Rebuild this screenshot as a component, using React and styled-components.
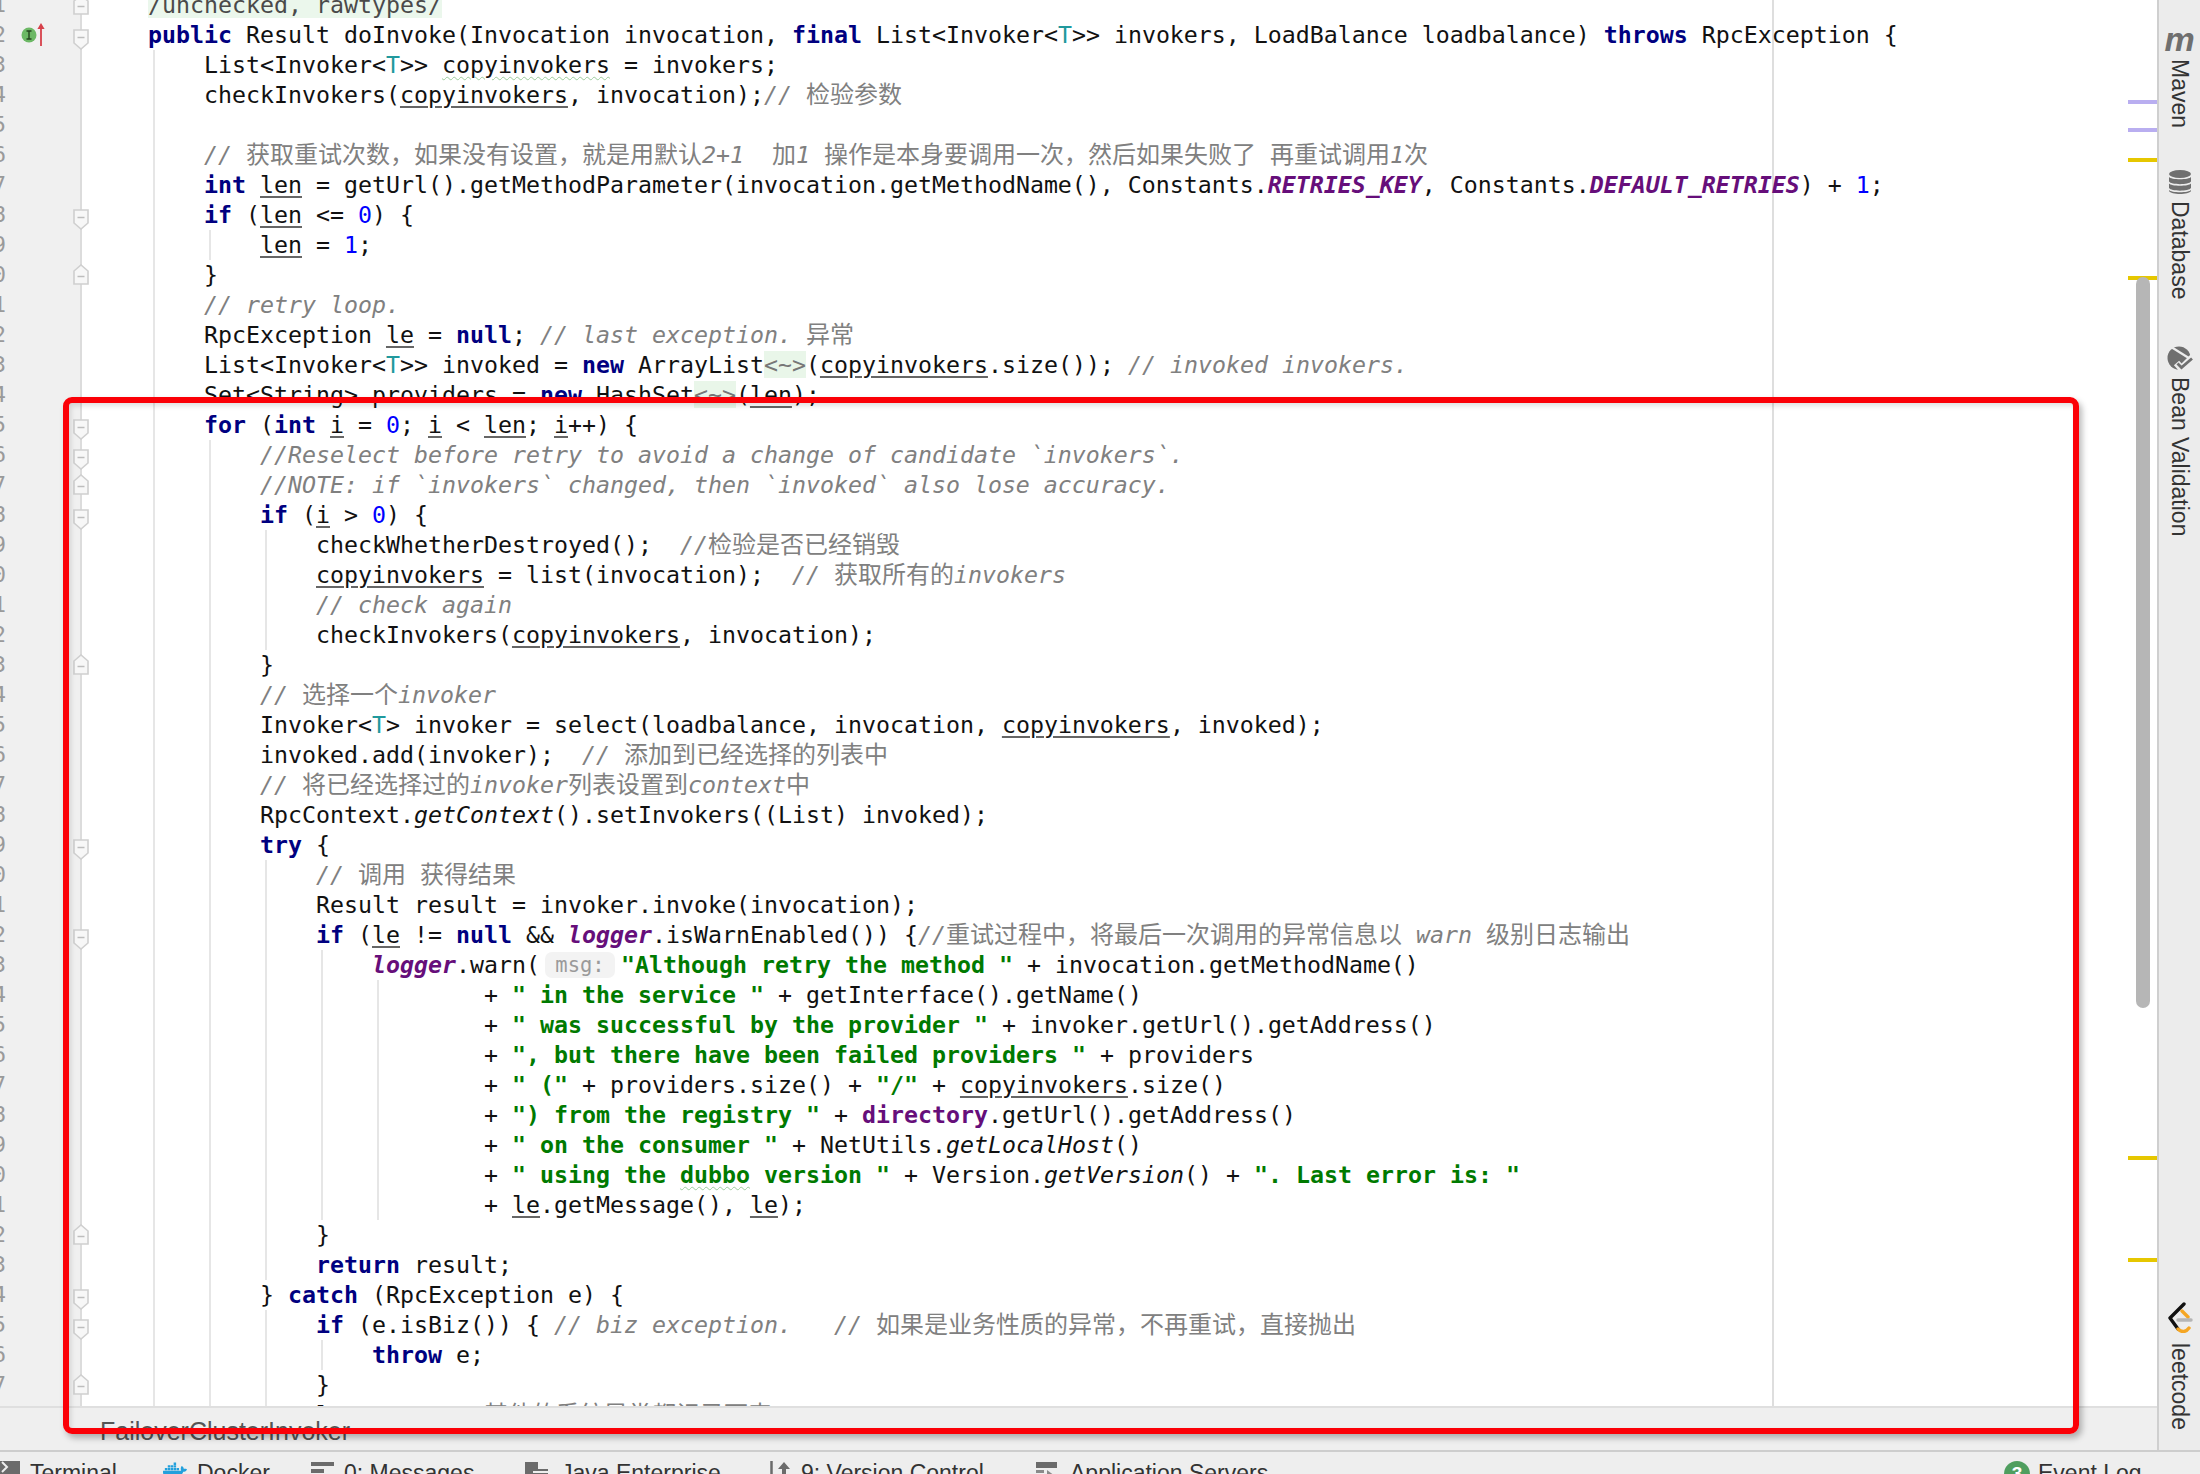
import React from "react";
import styled, { createGlobalStyle } from "styled-components";
import { FaDocker } from "react-icons/fa";

const GlobalStyle = createGlobalStyle`
  html, body {
    margin: 0;
    padding: 0;
    height: 100%;
    overflow: hidden;
    background: #fff;
  }
`;

const CHAR = 14.0;
const UI_FONT = `"Liberation Sans", Arial, sans-serif`;
const CODE_FONT = `"DejaVu Sans Mono", "Noto Sans CJK SC", monospace`;

const Page = styled.div`
  position: relative;
  width: 2200px;
  height: 1474px;
  display: flex;
  flex-direction: column;
  overflow: hidden;
  font-family: ${UI_FONT};
`;

const Workspace = styled.div`
  flex: 1;
  min-height: 0;
  display: flex;
`;

const Main = styled.div`
  flex: 1;
  min-width: 0;
  display: flex;
  flex-direction: column;
`;

const Editor = styled.div`
  position: relative;
  flex: 1;
  min-height: 0;
  overflow: hidden;
  background: #fff;
`;

const Lines = styled.div`
  margin-top: -10px;
`;

const MarginLine = styled.div`
  position: absolute;
  top: 0;
  bottom: 0;
  left: 1772px;
  width: 2px;
  background: #dedede;
`;

const Row = styled.div`
  position: relative;
  z-index: 1;
  display: flex;
  height: 30px;
`;

const GutterCell = styled.div`
  position: relative;
  flex: none;
  box-sizing: border-box;
  width: 82px;
  height: 30px;
  background: #f0f0f0;
  border-right: 2px solid #dcdcdc;
`;

const LineNo = styled.div`
  width: 6px;
  height: 30px;
  display: flex;
  justify-content: flex-end;
  overflow: hidden;
  font: 22px/30px ${CODE_FONT};
  color: #9a9a9a;
`;

const FoldIcon = styled.svg`
  position: absolute;
  left: 73px;
  top: ${({ $end }) => ($end ? 4 : 9)}px;
  width: 16px;
  height: 21px;
`;

const BreakIcon = styled.svg`
  position: absolute;
  left: 21px;
  top: 2px;
  width: 28px;
  height: 26px;
`;

const guideLayer = ({ $depth = 0 }) => {
  if (!$depth) return "";
  const items = Array.from({ length: $depth }, (_, n) => n);
  return `
    background-image: ${items.map(() => "linear-gradient(#e6e6e6, #e6e6e6)").join(", ")};
    background-size: 2px 100%;
    background-repeat: no-repeat;
    background-position: ${items.map((n) => `${71 + n * 55.9}px 0`).join(", ")};
  `;
};

const Code = styled.div`
  flex: 1;
  min-width: 0;
  box-sizing: border-box;
  height: 30px;
  padding-left: ${({ $col = 0 }) => 66 + $col * CHAR}px;
  font-family: ${CODE_FONT};
  font-size: 23.25px;
  line-height: 30px;
  white-space: pre;
  color: #111;
  ${guideLayer}
`;

const Kw = styled.span`
  color: #000080;
  font-weight: 700;
`;

const Str = styled.span`
  color: #007a00;
  font-weight: 700;
`;

const Num = styled.span`
  color: #0000ff;
`;

const Cm = styled.span`
  color: #808080;
  font-style: italic;
`;

const Zh = styled.span`
  font-family: "Noto Sans CJK SC", sans-serif;
  font-size: 24px;
  font-style: normal;
  line-height: 0;
`;

const TypeVar = styled.span`
  color: #20999d;
`;

const Field = styled.span`
  color: #660e7a;
  font-weight: 700;
  font-style: ${({ $plain }) => ($plain ? "normal" : "italic")};
`;

const Static = styled.span`
  font-style: italic;
`;

const Reassigned = styled.span`
  text-decoration: underline;
  text-decoration-color: #666;
  text-underline-offset: 3px;
`;

const Typo = styled.span`
  text-decoration: underline wavy #9ccb9c;
  text-decoration-thickness: 1px;
  text-underline-offset: 3px;
`;

const Folded = styled.span`
  background: #e9f6e9;
  color: #777;
`;

const Annotation = styled.span`
  background: #ebf7ec;
  color: #4a4a4a;
`;

const Hint = styled.span`
  display: inline-block;
  box-sizing: border-box;
  width: 70px;
  height: 26px;
  margin: 2px 6px 0 5px;
  border-radius: 7px;
  background: #f3f3f3;
  color: #9a9a9a;
  font-size: 20.5px;
  line-height: 26px;
  text-align: center;
  vertical-align: top;
`;

const Stripe = styled.div`
  position: absolute;
  right: 0;
  top: ${({ $y }) => $y}px;
  width: 29px;
  height: 4px;
  background: ${({ $kind }) => ($kind === "warn" ? "#e6c700" : "#b9aef0")};
  z-index: 2;
`;

const ScrollThumb = styled.div`
  position: absolute;
  top: 277px;
  left: 2136px;
  width: 14px;
  height: 731px;
  border-radius: 7px;
  background: #b6b6b6;
  z-index: 3;
`;

const Breadcrumb = styled.div`
  flex: none;
  box-sizing: border-box;
  height: 44px;
  padding: 10px 0 0 100px;
  border-top: 2px solid #dfdfdf;
  background: #efefef;
  color: #555;
  font-size: 25px;
  line-height: 26px;
`;

const SideBar = styled.aside`
  flex: none;
  box-sizing: border-box;
  width: 43px;
  padding-top: 30px;
  display: flex;
  flex-direction: column;
  border-left: 2px solid #cfcfcf;
  background: #ececec;
`;

const SideTab = styled.div`
  display: flex;
  flex-direction: column;
  align-items: center;
  margin-top: ${({ $gap = 0 }) => $gap}px;
  color: #333;
`;

const SideLabel = styled.span`
  writing-mode: vertical-rl;
  font-size: 23px;
  line-height: 24px;
`;

const MavenMark = styled.span`
  height: 24px;
  margin-bottom: 5px;
  color: #6f6f6f;
  font-size: 34px;
  font-weight: 700;
  font-style: italic;
  line-height: 18px;
`;

const SideIcon = styled.svg`
  display: block;
  flex: none;
  width: 26px;
  height: ${({ $h = 26 }) => $h}px;
  margin-bottom: ${({ $mb = 10 }) => $mb}px;
`;

const StatusBar = styled.footer`
  flex: none;
  box-sizing: border-box;
  height: 24px;
  padding-top: 9px;
  display: flex;
  border-top: 2px solid #cdcdcd;
  background: #eeeeee;
  overflow: hidden;
`;

const ToolTab = styled.div`
  display: flex;
  flex: none;
  width: ${({ $w }) => $w}px;
  gap: ${({ $gap = 10 }) => $gap}px;
  margin-left: ${({ $auto }) => ($auto ? "auto" : "0")};
  color: #333;
  font-size: 23px;
  line-height: 24px;
  white-space: nowrap;
`;

const ToolIcon = styled.svg`
  flex: none;
  width: ${({ $w = 24 }) => $w}px;
  height: 24px;
`;

const DockerIcon = styled(FaDocker)`
  flex: none;
  width: 24px;
  height: 20px;
  color: #23a0dc;
`;

const EventBadge = styled.span`
  flex: none;
  width: 26px;
  height: 26px;
  border-radius: 50%;
  background: #4f9e5f;
  color: #fff;
  font-size: 19px;
  font-weight: 700;
  line-height: 26px;
  text-align: center;
`;

const Highlight = styled.div`
  position: absolute;
  left: 63px;
  top: 397px;
  width: 2016px;
  height: 1037px;
  box-sizing: border-box;
  border: 6.5px solid #fb0007;
  border-radius: 9px;
  box-shadow: 3px 4px 6px rgba(0, 0, 0, 0.28), inset 2px 3px 5px rgba(0, 0, 0, 0.12);
  z-index: 5;
  pointer-events: none;
`;

function Fold({ end }) {
  return (
    <FoldIcon viewBox="0 0 16 21" $end={end}>
      <path
        d={end ? "M1 20V7L8 1l7 6v13z" : "M1 1v13l7 6 7-6V1z"}
        fill="#f7f7f7"
        stroke="#cfcfcf"
        strokeWidth="1.6"
      />
      <path d={end ? "M4.5 12.5h7" : "M4.5 8.5h7"} stroke="#bdbdbd" strokeWidth="1.5" />
    </FoldIcon>
  );
}

function Line({ n, fold, col, depth, mark, children }) {
  return (
    <Row>
      <GutterCell>
        <LineNo>{n % 10}</LineNo>
        {mark && (
          <BreakIcon viewBox="0 0 28 26">
            <circle cx="8" cy="13" r="7.5" fill="#6cb865" />
            <path d="M5.5 9h5M5.5 17h5M8 9v8" stroke="#24451f" strokeWidth="1.4" fill="none" />
            <path d="M20 24V5" stroke="#d6404a" strokeWidth="1.8" />
            <path d="M20 1l-3.6 6h7.2z" fill="#d6404a" />
          </BreakIcon>
        )}
        {fold && <Fold end={fold === "end"} />}
      </GutterCell>
      <Code $col={col} $depth={depth}>
        {children}
      </Code>
    </Row>
  );
}

const Copy = () => <Reassigned>copyinvokers</Reassigned>;
const Len = () => <Reassigned>len</Reassigned>;
const Le = () => <Reassigned>le</Reassigned>;
const I = () => <Reassigned>i</Reassigned>;
const T = () => <TypeVar>T</TypeVar>;

function CodeLines() {
  return (
    <Lines>
      <Line n={1} fold="end"><Annotation>/unchecked, rawtypes/</Annotation></Line>
      <Line n={2} fold="start" mark>
        <Kw>public</Kw> Result doInvoke(Invocation invocation, <Kw>final</Kw> List&lt;Invoker&lt;<T />&gt;&gt; invokers, LoadBalance loadbalance) <Kw>throws</Kw> RpcException {"{"}
      </Line>
      <Line n={3} col={4} depth={1}>List&lt;Invoker&lt;<T />&gt;&gt; <Typo>copyinvokers</Typo> = invokers;</Line>
      <Line n={4} col={4} depth={1}>checkInvokers(<Copy />, invocation);<Cm>// <Zh>检验参数</Zh></Cm></Line>
      <Line n={5} depth={1} />
      <Line n={6} col={4} depth={1}>
        <Cm>// <Zh>获取重试次数，如果没有设置，就是用默认</Zh>2+1  <Zh>加</Zh>1 <Zh>操作是本身要调用一次，然后如果失败了</Zh> <Zh>再重试调用</Zh>1<Zh>次</Zh></Cm>
      </Line>
      <Line n={7} col={4} depth={1}>
        <Kw>int</Kw> <Len /> = getUrl().getMethodParameter(invocation.getMethodName(), Constants.<Field>RETRIES_KEY</Field>, Constants.<Field>DEFAULT_RETRIES</Field>) + <Num>1</Num>;
      </Line>
      <Line n={8} col={4} depth={1} fold="start"><Kw>if</Kw> (<Len /> &lt;= <Num>0</Num>) {"{"}</Line>
      <Line n={9} col={8} depth={2}><Len /> = <Num>1</Num>;</Line>
      <Line n={10} col={4} depth={1} fold="end">{"}"}</Line>
      <Line n={11} col={4} depth={1}><Cm>// retry loop.</Cm></Line>
      <Line n={12} col={4} depth={1}>
        RpcException <Le /> = <Kw>null</Kw>; <Cm>// last exception. <Zh>异常</Zh></Cm>
      </Line>
      <Line n={13} col={4} depth={1}>
        List&lt;Invoker&lt;<T />&gt;&gt; invoked = <Kw>new</Kw> ArrayList<Folded>&lt;~&gt;</Folded>(<Copy />.size()); <Cm>// invoked invokers.</Cm>
      </Line>
      <Line n={14} col={4} depth={1}>
        Set&lt;String&gt; providers = <Kw>new</Kw> HashSet<Folded>&lt;~&gt;</Folded>(<Len />);
      </Line>
      <Line n={15} col={4} depth={1} fold="start">
        <Kw>for</Kw> (<Kw>int</Kw> <I /> = <Num>0</Num>; <I /> &lt; <Len />; <I />++) {"{"}
      </Line>
      <Line n={16} col={8} depth={2} fold="start"><Cm>//Reselect before retry to avoid a change of candidate `invokers`.</Cm></Line>
      <Line n={17} col={8} depth={2} fold="end"><Cm>//NOTE: if `invokers` changed, then `invoked` also lose accuracy.</Cm></Line>
      <Line n={18} col={8} depth={2} fold="start"><Kw>if</Kw> (<I /> &gt; <Num>0</Num>) {"{"}</Line>
      <Line n={19} col={12} depth={3}>checkWhetherDestroyed();  <Cm>//<Zh>检验是否已经销毁</Zh></Cm></Line>
      <Line n={20} col={12} depth={3}><Copy /> = list(invocation);  <Cm>// <Zh>获取所有的</Zh>invokers</Cm></Line>
      <Line n={21} col={12} depth={3}><Cm>// check again</Cm></Line>
      <Line n={22} col={12} depth={3}>checkInvokers(<Copy />, invocation);</Line>
      <Line n={23} col={8} depth={2} fold="end">{"}"}</Line>
      <Line n={24} col={8} depth={2}><Cm>// <Zh>选择一个</Zh>invoker</Cm></Line>
      <Line n={25} col={8} depth={2}>
        Invoker&lt;<T />&gt; invoker = select(loadbalance, invocation, <Copy />, invoked);
      </Line>
      <Line n={26} col={8} depth={2}>invoked.add(invoker);  <Cm>// <Zh>添加到已经选择的列表中</Zh></Cm></Line>
      <Line n={27} col={8} depth={2}><Cm>// <Zh>将已经选择过的</Zh>invoker<Zh>列表设置到</Zh>context<Zh>中</Zh></Cm></Line>
      <Line n={28} col={8} depth={2}>RpcContext.<Static>getContext</Static>().setInvokers((List) invoked);</Line>
      <Line n={29} col={8} depth={2} fold="start"><Kw>try</Kw> {"{"}</Line>
      <Line n={30} col={12} depth={3}><Cm>// <Zh>调用</Zh> <Zh>获得结果</Zh></Cm></Line>
      <Line n={31} col={12} depth={3}>Result result = invoker.invoke(invocation);</Line>
      <Line n={32} col={12} depth={3} fold="start">
        <Kw>if</Kw> (<Le /> != <Kw>null</Kw> &amp;&amp; <Field>logger</Field>.isWarnEnabled()) {"{"}<Cm>//<Zh>重试过程中，将最后一次调用的异常信息以</Zh> warn <Zh>级别日志输出</Zh></Cm>
      </Line>
      <Line n={33} col={16} depth={4}>
        <Field>logger</Field>.warn(<Hint>msg:</Hint><Str>"Although retry the method "</Str> + invocation.getMethodName()
      </Line>
      <Line n={34} col={24} depth={5}>+ <Str>" in the service "</Str> + getInterface().getName()</Line>
      <Line n={35} col={24} depth={5}>+ <Str>" was successful by the provider "</Str> + invoker.getUrl().getAddress()</Line>
      <Line n={36} col={24} depth={5}>+ <Str>", but there have been failed providers "</Str> + providers</Line>
      <Line n={37} col={24} depth={5}>+ <Str>" ("</Str> + providers.size() + <Str>"/"</Str> + <Copy />.size()</Line>
      <Line n={38} col={24} depth={5}>+ <Str>") from the registry "</Str> + <Field $plain>directory</Field>.getUrl().getAddress()</Line>
      <Line n={39} col={24} depth={5}>+ <Str>" on the consumer "</Str> + NetUtils.<Static>getLocalHost</Static>()</Line>
      <Line n={40} col={24} depth={5}>
        + <Str>" using the <Typo>dubbo</Typo> version "</Str> + Version.<Static>getVersion</Static>() + <Str>". Last error is: "</Str>
      </Line>
      <Line n={41} col={24} depth={5}>+ <Le />.getMessage(), <Le />);</Line>
      <Line n={42} col={12} depth={3} fold="end">{"}"}</Line>
      <Line n={43} col={12} depth={3}><Kw>return</Kw> result;</Line>
      <Line n={44} col={8} depth={2} fold="start">{"} "}<Kw>catch</Kw> (RpcException e) {"{"}</Line>
      <Line n={45} col={12} depth={3} fold="start">
        <Kw>if</Kw> (e.isBiz()) {"{"} <Cm>// biz exception.   // <Zh>如果是业务性质的异常，不再重试，直接抛出</Zh></Cm>
      </Line>
      <Line n={46} col={16} depth={4}><Kw>throw</Kw> e;</Line>
      <Line n={47} col={12} depth={3} fold="end">{"}"}</Line>
      <Line n={48} col={12} depth={3}><Le /> = e;  <Cm>// <Zh>其他的系统异常都记录下来</Zh></Cm></Line>
    </Lines>
  );
}

function DatabaseGlyph() {
  return (
    <SideIcon viewBox="0 0 26 26" $mb={6}>
      <g fill="#6f6f6f">
        <ellipse cx="13" cy="5" rx="11" ry="4" />
        <path d="M2 8c2 3 20 3 22 0v4.5c-2 3.5-20 3.5-22 0z" />
        <path d="M2 14.5c2 3 20 3 22 0v4.5c-2 3.500-20 3.500-22 0z" />
        <path d="M2 21c2 3 20 3 22 0v1c-2 4-20 4-22 0z" />
      </g>
    </SideIcon>
  );
}

function BeanGlyph() {
  return (
    <SideIcon viewBox="0 0 26 26" $mb={5}>
      <circle cx="12" cy="12" r="11.500" fill="#6f6f6f" />
      <path d="M5 1.500L25 14" stroke="#ececec" strokeWidth="2.200" />
      <path d="M9.500 17l5 5.500L26 11" fill="none" stroke="#ececec" strokeWidth="7" />
      <path d="M10.500 17.500l4 4L25 12.500" fill="none" stroke="#6f6f6f" strokeWidth="2.800" />
    </SideIcon>
  );
}

function LeetcodeGlyph() {
  return (
    <SideIcon viewBox="0 0 26 31" $h={31} $mb={10}>
      <path d="M17 2L3 16 11 27" fill="none" stroke="#111" strokeWidth="3.400" strokeLinecap="round" strokeLinejoin="round" />
      <path d="M15 9l6 6M11 27c4 4 8 3 11-1" fill="none" stroke="#f5a623" strokeWidth="3.400" strokeLinecap="round" />
      <path d="M11 18h13" stroke="#b5b5b5" strokeWidth="3.400" strokeLinecap="round" />
    </SideIcon>
  );
}

export default function App() {
  return (
    <Page>
      <GlobalStyle />
      <Workspace>
        <Main>
          <Editor>
            <MarginLine />
            <CodeLines />
            <Stripe $y={100} />
            <Stripe $y={128} />
            <Stripe $y={158} $kind="warn" />
            <Stripe $y={276} $kind="warn" />
            <Stripe $y={1156} $kind="warn" />
            <Stripe $y={1258} $kind="warn" />
            <ScrollThumb />
          </Editor>
          <Breadcrumb>FailoverClusterInvoker</Breadcrumb>
        </Main>
        <SideBar>
          <SideTab>
            <MavenMark>m</MavenMark>
            <SideLabel>Maven</SideLabel>
          </SideTab>
          <SideTab $gap={41}>
            <DatabaseGlyph />
            <SideLabel>Database</SideLabel>
          </SideTab>
          <SideTab $gap={46}>
            <BeanGlyph />
            <SideLabel>Bean Validation</SideLabel>
          </SideTab>
          <SideTab $gap={766}>
            <LeetcodeGlyph />
            <SideLabel>leetcode</SideLabel>
          </SideTab>
        </SideBar>
      </Workspace>
      <StatusBar>
        <ToolTab $w={163} $gap={10}>
          <ToolIcon $w={20} viewBox="0 0 20 24">
            <rect width="20" height="24" y="-4" fill="#6b6b6b" />
            <path d="M2 1l5 5-5 5" fill="none" stroke="#eee" strokeWidth="2" />
          </ToolIcon>
          Terminal
        </ToolTab>
        <ToolTab $w={148} $gap={10}>
          <DockerIcon />
          Docker
        </ToolTab>
        <ToolTab $w={214} $gap={10}>
          <ToolIcon $w={23} viewBox="0 0 23 24">
            <path d="M0 0h23v4H0zM0 7h13v4H0zM0 14h23v4H0z" fill="#6b6b6b" transform="translate(0 1)" />
          </ToolIcon>
          0: Messages
        </ToolTab>
        <ToolTab $w={245} $gap={13}>
          <ToolIcon $w={23} viewBox="0 0 23 24">
            <path d="M0 0h13v7h10v17H0z" fill="#6b6b6b" transform="translate(0 1)" />
            <path d="M8 11h15" stroke="#eee" strokeWidth="2" />
          </ToolIcon>
          Java Enterprise
        </ToolTab>
        <ToolTab $w={266} $gap={10}>
          <ToolIcon $w={21} viewBox="0 0 21 24">
            <path d="M1.500 0v24" stroke="#6b6b6b" strokeWidth="2.500" />
            <path d="M14 1l6 7h-4v16h-4V8H8z" fill="#6b6b6b" />
          </ToolIcon>
          9: Version Control
        </ToolTab>
        <ToolTab $w={300} $gap={13}>
          <ToolIcon $w={21} viewBox="0 0 21 24">
            <path d="M0 1h21v6H0z" fill="#6b6b6b" />
            <path d="M0 9h8v3H0zM0 13h8v8H0zM11 9l8 6-8 6z" fill="#8a8a8a" />
          </ToolIcon>
          Application Servers
        </ToolTab>
        <ToolTab $auto $w={196} $gap={8}>
          <EventBadge>3</EventBadge>
          Event Log
        </ToolTab>
      </StatusBar>
      <Highlight />
    </Page>
  );
}
